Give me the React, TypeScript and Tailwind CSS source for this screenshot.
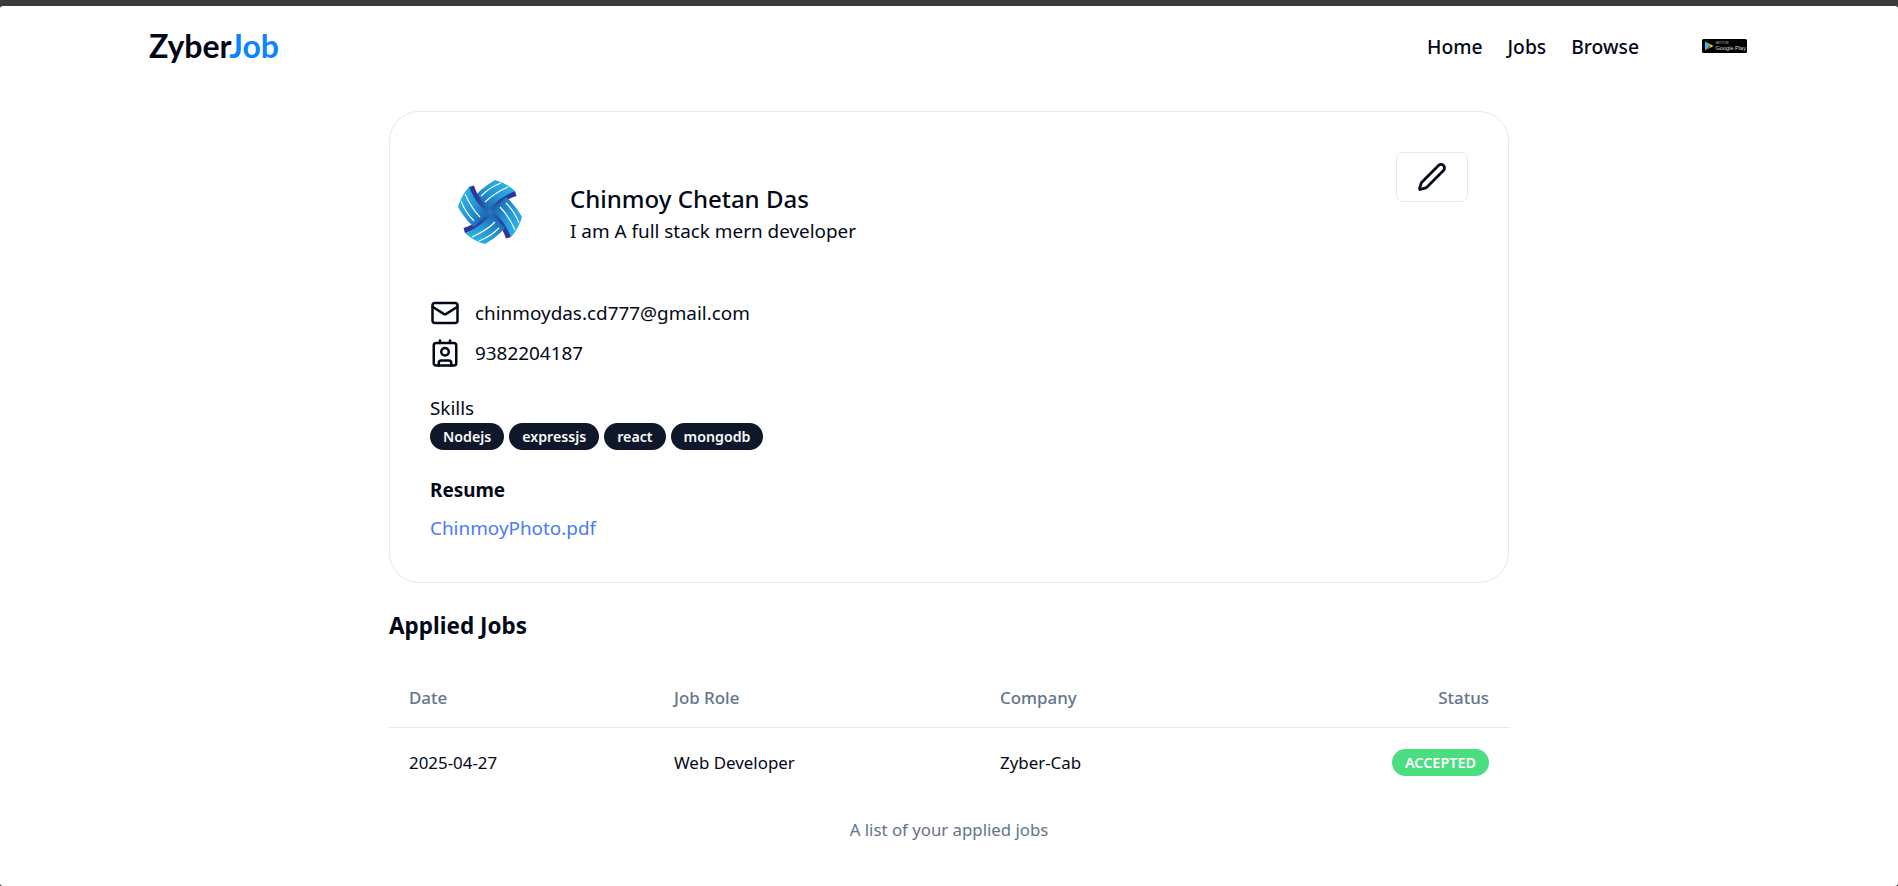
import React from 'react';
import { Mail, Pen, Contact } from 'lucide-react';

const skills = ['Nodejs', 'expressjs', 'react', 'mongodb'];

const SwirlLogo = () => (
  <svg viewBox="-32 -32 64 64" className="w-[64px] h-[64px]">
    <defs>
      <linearGradient id="blade" gradientUnits="userSpaceOnUse" x1="-4" y1="-6" x2="12" y2="-30">
        <stop offset="0" stopColor="#1b6fb8" />
        <stop offset="0.5" stopColor="#2497d6" />
        <stop offset="1" stopColor="#2bb0e6" />
      </linearGradient>
      <linearGradient id="strip" gradientUnits="userSpaceOnUse" x1="-2" y1="-3" x2="26" y2="-20">
        <stop offset="0" stopColor="#2a6db5" />
        <stop offset="0.5" stopColor="#2d3e9c" />
        <stop offset="1" stopColor="#2e3192" />
      </linearGradient>
    </defs>
    <circle r="13" fill="#1f78c0" />
    {[0, 90, 180, 270].map((deg) => (
      <g key={deg} transform={`rotate(${deg})`}>
        <path d="M-1 -2 L-15 -16 C-8 -24 0 -29 5 -32 C12 -30 20 -26 25 -21 C15 -16 6 -10 -1 -2 Z" fill="url(#blade)" />
        <path d="M-9 -16 C-4 -21 3 -26 11 -29" stroke="#fff" strokeWidth="1.1" fill="none" />
        <path d="M-5 -10 C1 -16 9 -21 18 -25" stroke="#fff" strokeWidth="1.1" fill="none" />
        <path d="M-1 -3 C6 -11 15 -17 25 -21 L26.5 -16 C17 -13 8 -7 2 -1 Z" fill="url(#strip)" />
      </g>
    ))}
  </svg>
);

const PlayBadge = () => (
  <svg viewBox="0 0 45 14" className="w-[45px] h-[14px]">
    <rect width="45" height="14" rx="1.5" fill="#000" />
    <path d="M3 2.5 L3 11.5 L7.5 7 Z" fill="#38bdf8" />
    <path d="M3 2.5 L7.5 7 L9 5.5 Z" fill="#4ade80" />
    <path d="M3 11.5 L7.5 7 L9 8.5 Z" fill="#ef4444" />
    <path d="M9 5.5 L11.5 7 L9 8.5 L7.5 7 Z" fill="#facc15" />
    <text x="13.5" y="4.6" fontSize="2.6" fill="#ddd" fontFamily="'Liberation Sans', sans-serif">GET IT ON</text>
    <text x="13.5" y="10.8" fontSize="5.6" fill="#ddd" fontFamily="'Liberation Sans', sans-serif">Google Play</text>
  </svg>
);

export default function App() {
  return (
    <div className="h-[886px] overflow-hidden bg-[#3b3b3b] pt-[6px] font-['Noto_Sans',sans-serif] text-[#020817] text-[18.9px]">
      <div className="h-[880px] bg-white rounded-[3px]">
        {/* Navbar */}
        <div className="mx-auto flex h-[80px] max-w-[1600px] items-center justify-between">
          <h1 className="font-['Lato',sans-serif] text-[32px] font-bold">
            Zyber<span className="text-[#0a84ff]">Job</span>
          </h1>
          <div className="flex items-center gap-[63px] pr-[2px]">
            <ul className="flex items-center gap-[25px] pt-[2px] text-[19.3px] font-medium">
              <li>Home</li>
              <li>Jobs</li>
              <li>Browse</li>
            </ul>
            <PlayBadge />
          </div>
        </div>

        <div className="mx-auto w-[1120px]">
          {/* Profile card */}
          <div className="mt-[25px] h-[472px] rounded-[30px] border border-gray-200 p-[40px] pt-[41px]">
            <div className="flex justify-between">
              <div className="flex items-center gap-[20px]">
                <div className="flex h-[120px] w-[120px] -translate-y-[1px] items-center justify-center">
                  <SwirlLogo />
                </div>
                <div>
                  <h2 className="text-[24px] font-medium leading-[35px]">Chinmoy Chetan Das</h2>
                  <p className="leading-[30px]">I am A full stack mern developer</p>
                </div>
              </div>
              <button className="-mt-[1px] flex h-[50px] w-[72px] items-center justify-center rounded-[7px] border border-[#e2e8f0]">
                <Pen size={30} strokeWidth={2.2} />
              </button>
            </div>

            <div className="my-[25px]">
              <div className="my-[10px] flex items-center gap-[15px]">
                <Mail size={30} />
                <span>chinmoydas.cd777@gmail.com</span>
              </div>
              <div className="my-[10px] flex items-center gap-[15px]">
                <Contact size={30} />
                <span>9382204187</span>
              </div>
            </div>

            <div className="my-[25px]">
              <h3 className="leading-[30px]">Skills</h3>
              <div className="flex items-center gap-[5px]">
                {skills.map((s) => (
                  <span key={s} className="rounded-full bg-[#0f172a] px-[13px] py-[2px] text-[14.2px] font-semibold leading-[23px] text-[#f8fafc]">
                    {s}
                  </span>
                ))}
              </div>
            </div>

            <div>
              <div className="font-bold leading-[30px]">Resume</div>
              <a className="mt-[8px] block leading-[30px] text-[#4b7bf5]">ChinmoyPhoto.pdf</a>
            </div>
          </div>

          {/* Applied jobs */}
          <h2 className="mb-[25px] mt-[27px] text-[22.5px] font-bold leading-[32px]">Applied Jobs</h2>
          <table className="w-full table-fixed text-[16.9px]">
            <colgroup>
              <col className="w-[265px]" />
              <col className="w-[326px]" />
              <col className="w-[280px]" />
              <col />
            </colgroup>
            <thead>
              <tr className="h-[60px] border-b border-[#e2e8f0] text-left text-[#64748b]">
                <th className="px-[20px] pt-[2px] font-medium">Date</th>
                <th className="px-[20px] pt-[2px] font-medium">Job Role</th>
                <th className="px-[20px] pt-[2px] font-medium">Company</th>
                <th className="px-[20px] pt-[2px] text-right font-medium">Status</th>
              </tr>
            </thead>
            <tbody>
              <tr className="h-[70px]">
                <td className="px-[20px]">2025-04-27</td>
                <td className="px-[20px]">Web Developer</td>
                <td className="px-[20px]">Zyber-Cab</td>
                <td className="px-[20px] text-right">
                  <span className="inline-block rounded-full bg-[#4ade80] px-[13px] py-[2px] text-[14.4px] font-semibold leading-[23px] text-white">
                    ACCEPTED
                  </span>
                </td>
              </tr>
            </tbody>
          </table>
          <p className="mt-[15px] text-center text-[16.8px] leading-[35px] text-[#64748b]">A list of your applied jobs</p>
        </div>
      </div>
    </div>
  );
}
